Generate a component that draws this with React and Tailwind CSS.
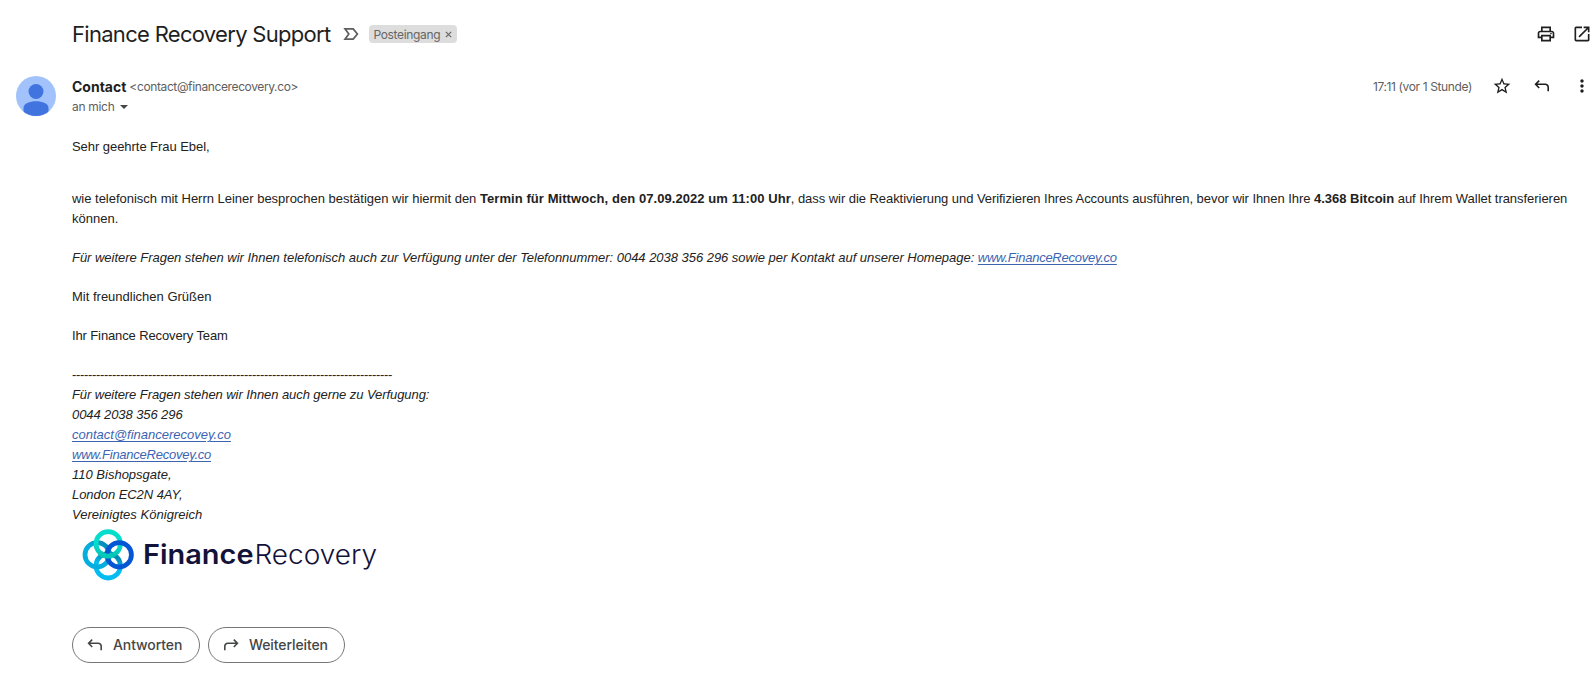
import React from 'react';
import { MdOutlinePrint, MdOpenInNew, MdStarBorder, MdMoreVert } from 'react-icons/md';

const ReplyIcon = ({ className }) => (
  <svg viewBox="0 0 20 20" className={className} fill="none" stroke="currentColor" strokeWidth="1.6">
    <path d="M7.2 4.600 3.600 8.300l3.600 3.700M4 8.300h9.200a3 3 0 0 1 3 3v4" />
  </svg>
);

const ImportantIcon = ({ className }) => (
  <svg viewBox="0 0 20 20" className={className} fill="none" stroke="currentColor" strokeWidth="1.7">
    <path d="M4 4.850h8.200l4.200 5.150-4.200 5.150H4l3.800-5.150z" />
  </svg>
);

const Avatar = () => (
  <svg viewBox="0 0 40 40" className="h-10 w-10 shrink-0">
    <defs>
      <clipPath id="avatar-clip">
        <circle cx="20" cy="20" r="20" />
      </clipPath>
    </defs>
    <g clipPath="url(#avatar-clip)">
      <rect width="40" height="40" fill="#a1c2fa" />
      <circle cx="20" cy="15.5" r="7.5" fill="#4274e0" />
      <path d="M7.5 32c0-4.500 6-6.700 12.500-6.700s12.500 2.200 12.500 6.700v9h-25z" fill="#4274e0" />
    </g>
  </svg>
);

const Logo = () => (
  <svg viewBox="0 0 300 52" className="mt-1 ml-[10px] h-[52px] w-[300px]">
    <defs>
      <linearGradient id="ring-left" x1="0" y1="1" x2="1" y2="0">
        <stop offset="0.5" stopColor="#06aede" />
        <stop offset="1" stopColor="#0583a8" />
      </linearGradient>
      <linearGradient id="ring-bottom" x1="0" y1="1" x2="0.3" y2="0">
        <stop offset="0.6" stopColor="#04bcf0" />
        <stop offset="1" stopColor="#0789b5" />
      </linearGradient>
      <linearGradient id="ring-top" x1="0" y1="0" x2="0" y2="1">
        <stop offset="0.5" stopColor="#05ddcc" />
        <stop offset="1" stopColor="#06c4b4" />
      </linearGradient>
    </defs>
    <g fill="none" strokeWidth="4.8">
      <circle cx="26.2" cy="36.8" r="12.2" stroke="url(#ring-bottom)" />
      <circle cx="15.2" cy="25.8" r="12.2" stroke="url(#ring-left)" />
      <circle cx="26.2" cy="14.8" r="12.2" stroke="url(#ring-top)" />
      <circle cx="37.2" cy="25.8" r="12.2" stroke="#0556d4" />
      <path d="M30.4 26.3A12.2 12.2 0 0 1 17.6 23.5" stroke="#06c9b9" />
    </g>
    <g fill="#12123b" fontFamily="Inter, sans-serif" fontSize="26.5">
      <text x="61" y="35" fontWeight="600" textLength="110.5" lengthAdjust="spacingAndGlyphs">Finance</text>
      <text x="172.5" y="35" fontWeight="300" textLength="122.5" lengthAdjust="spacingAndGlyphs">Recovery</text>
    </g>
  </svg>
);

const MailLink = ({ children, className = '' }) => (
  <a href="#" className={`text-[#3c64b1] underline underline-offset-2 ${className}`}>
    {children}
  </a>
);

const Header = () => (
  <header className="flex h-[68px] items-center pl-[72px]">
    <h1 className="text-[22px] leading-7 tracking-[-0.7px] text-[#1f1f1f]">Finance Recovery Support</h1>
    <ImportantIcon className="ml-[11px] h-5 w-5 text-[#5e5e5e]" />
    <span className="ml-[8px] flex h-[18px] w-[88px] items-center justify-between rounded bg-[#ddd] pr-[5px] pl-1 text-xs text-[#666]">
      <span className="mt-px tracking-[-0.34px]">Posteingang</span>
      <svg viewBox="0 0 8 8" className="mt-px h-[7px] w-[7px]" stroke="currentColor" strokeWidth="1.4">
        <path d="M1 1l6 6M7 1L1 7" />
      </svg>
    </span>
    <div className="ml-auto flex gap-4 text-[#1f1f1f]">
      <MdOutlinePrint className="h-5 w-5" />
      <MdOpenInNew className="h-5 w-5" />
    </div>
  </header>
);

const Sender = () => (
  <div className="flex h-16 items-start pt-2 pl-4">
    <Avatar />
    <div className="mt-px ml-4">
      <div className="flex h-5 items-center gap-[3px]">
        <span className="text-sm font-bold text-[#1f1f1f]">Contact</span>
        <span className="text-xs tracking-[-0.38px] text-[#5e5e5e]">&lt;contact@financerecovery.co&gt;</span>
      </div>
      <div className="flex h-5 items-center text-xs text-[#5e5e5e]">
        <span className="tracking-[-0.3px]">an mich</span>
        <svg viewBox="0 0 8 4" className="ml-[6px] h-1 w-2" fill="#444746">
          <path d="M0 0h8L4 4z" />
        </svg>
      </div>
    </div>
    <div className="ml-auto flex h-5 items-center text-[#1f1f1f]">
      <span className="mt-[2px] text-xs tracking-[-0.37px] text-[#5e5e5e]">17:11 (vor 1 Stunde)</span>
      <MdStarBorder className="ml-5 h-5 w-5" />
      <ReplyIcon className="ml-5 h-5 w-5" />
      <MdMoreVert className="ml-5 h-5 w-5" />
    </div>
  </div>
);

const Signature = () => (
  <div className="mt-[19px]">
    <p className="tracking-[-0.33px]">{'-'.repeat(80)}</p>
    <div className="italic">
      <p className="tracking-[-0.07px]">Für weitere Fragen stehen wir Ihnen auch gerne zu Verfugung:</p>
      <p className="tracking-[-0.09px]">0044 2038 356 296</p>
      <p><MailLink>contact@financerecovey.co</MailLink></p>
      <p><MailLink className="tracking-[-0.25px]">www.FinanceRecovey.co</MailLink></p>
      <p>110 Bishopsgate,</p>
      <p className="tracking-[-0.05px]">London EC2N 4AY,</p>
      <p className="tracking-[0.03px]">Vereinigtes Königreich</p>
    </div>
    <Logo />
  </div>
);

const MailBody = () => (
  <main className="pt-[5px] pr-4 pl-[72px] font-['Liberation_Sans',Arial,sans-serif] text-[13px] leading-5 whitespace-nowrap text-[#222]">
    <p className="tracking-[-0.05px]">Sehr geehrte Frau Ebel,</p>
    <p className="mt-8">
      <span className="tracking-[-0.015px]">
        wie telefonisch mit Herrn Leiner besprochen bestätigen wir hiermit den{' '}
      </span>
      <b className="tracking-[0.07px]">Termin für Mittwoch, den 07.09.2022 um 11:00 Uhr</b>
      <span className="tracking-[-0.055px]">
        , dass wir die Reaktivierung und Verifizieren Ihres Accounts ausführen, bevor wir Ihnen Ihre{' '}
      </span>
      <b>4.368 Bitcoin</b>
      <span className="tracking-[-0.04px]"> auf Ihrem Wallet transferieren</span>
      <br />
      können.
    </p>
    <p className="mt-[19px] tracking-[-0.03px] italic">
      Für weitere Fragen stehen wir Ihnen telefonisch auch zur Verfügung unter der Telefonnummer: 0044 2038 356 296
      sowie per Kontakt auf unserer Homepage: <MailLink className="tracking-[-0.25px]">www.FinanceRecovey.co</MailLink>
    </p>
    <p className="mt-[19px]">Mit freundlichen Grüßen</p>
    <p className="mt-[19px] tracking-[-0.12px]">Ihr Finance Recovery Team</p>
    <Signature />
  </main>
);

const ActionButton = ({ label, flip, className }) => (
  <button
    className={`flex h-9 items-center rounded-full border border-[#747775] pl-3 text-sm font-medium text-[#444746] ${className}`}
  >
    <ReplyIcon className={flip ? 'h-5 w-5 -scale-x-100' : 'h-5 w-5'} />
    <span className="ml-2 tracking-[-0.1px]">{label}</span>
  </button>
);

const App = () => (
  <div className="h-[680px] w-full overflow-hidden bg-white font-[Inter,sans-serif]">
    <Header />
    <Sender />
    <MailBody />
    <div className="mt-[46px] flex gap-2 pl-[72px]">
      <ActionButton label="Antworten" className="w-32" />
      <ActionButton label="Weiterleiten" flip className="w-[137px]" />
    </div>
  </div>
);

export default App;
